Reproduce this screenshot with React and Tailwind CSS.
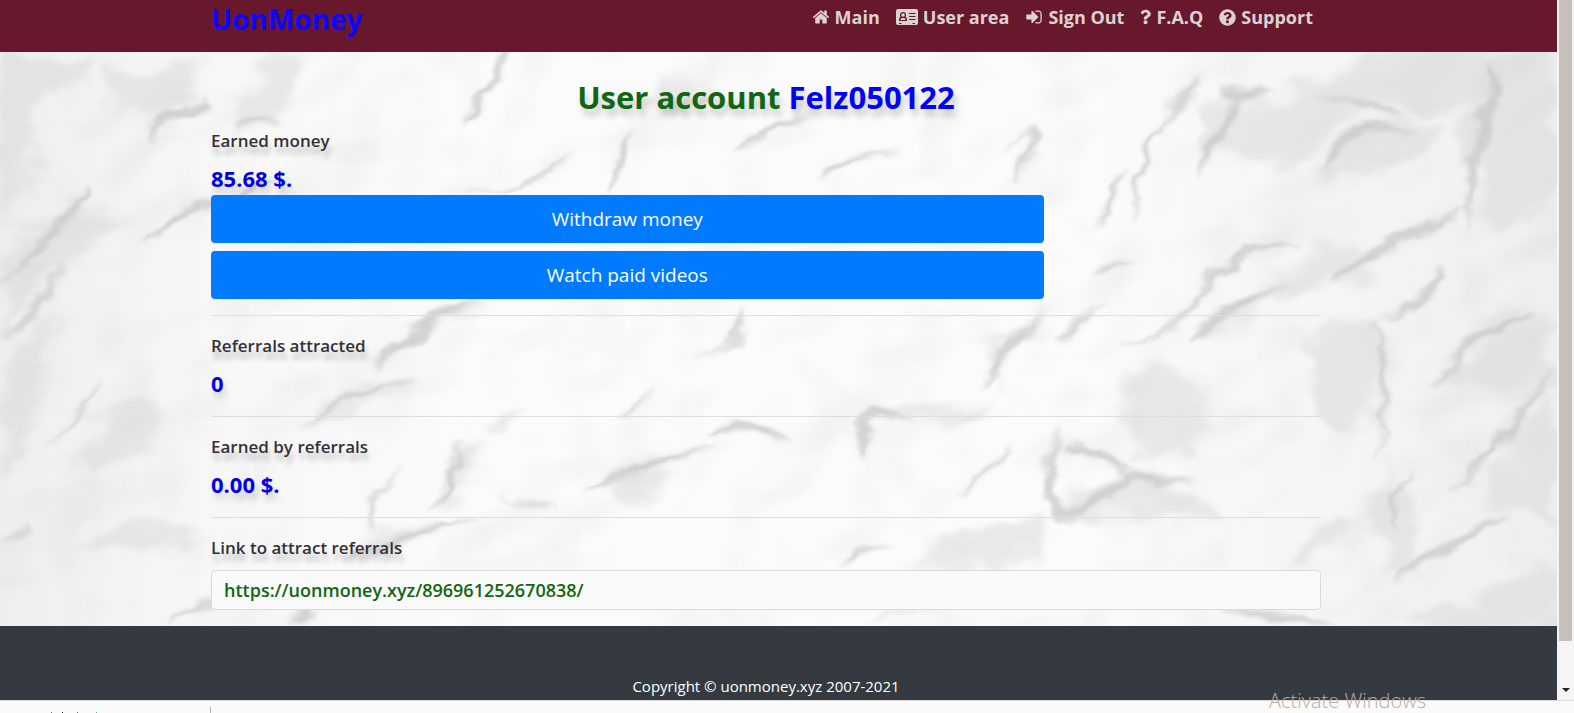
import { FaQuestion, FaQuestionCircle } from 'react-icons/fa';

const HomeIcon = () => (
  <svg className="w-[18px] h-[18px]" viewBox="0 0 1792 1792" fill="currentColor" aria-hidden="true">
    <path d="M1472 992v480q0 26-19 45t-45 19h-384v-384h-256v384h-384q-26 0-45-19t-19-45v-480q0-1 .5-3t.5-3l575-474 575 474q1 2 1 6zm223-69l-62 74q-8 9-21 11h-3q-13 0-21-7l-692-577-692 577q-12 8-24 7-13-2-21-11l-62-74q-8-10-7-23.5t11-21.5l719-599q32-26 76-26t76 26l244 204v-195q0-14 9-23t23-9h192q14 0 23 9t9 23v408l219 182q10 8 11 21.5t-7 23.5z" />
  </svg>
);

const CardIcon = () => (
  <svg className="w-[22px] h-[18px]" viewBox="0 0 22 18" aria-hidden="true">
    <rect x="0" y="1" width="22" height="16" rx="2" fill="currentColor" />
    <path d="M3 13v-1.500q0-2.500 2-2.700h4q2 .2 2 2.700V13z" fill="#68182d" />
    <circle cx="7" cy="7" r="3" fill="#68182d" />
    <circle cx="7" cy="7" r="1.800" fill="currentColor" />
    <path d="M4.500 12q0-2 1.300-2h2.400q1.300 0 1.300 2z" fill="currentColor" />
    <path d="M13 5.500h6.500M13 8.500h6.500M13 11.500h6.500M3 15.500h2.500M16.500 15.500H19" stroke="#68182d" strokeWidth="1.200" />
  </svg>
);

const SignIcon = () => (
  <svg className="w-[18px] h-[18px]" viewBox="0 0 1792 1792" fill="currentColor" aria-hidden="true">
    <path d="M1312 896q0 26-19 45l-544 544q-19 19-45 19t-45-19-19-45v-288h-448q-26 0-45-19t-19-45v-384q0-26 19-45t45-19h448v-288q0-26 19-45t45-19 45 19l544 544q19 19 19 45zm352-352v704q0 119-84.500 203.500t-203.500 84.500h-320q-13 0-22.500-9.500t-9.500-22.500q0-4-1-20t-.5-26.500 3-23.500 10-19.500 20.500-6.500h320q66 0 113-47t47-113v-704q0-66-47-113t-113-47h-312l-11.500-1-11.500-3-8-5.500-7-9-2-13.500q0-4-1-20t-.5-26.500 3-23.500 10-19.500 20.500-6.500h320q119 0 203.500 84.500t84.500 203.500z" />
  </svg>
);

const navItems = [
  { label: 'Main', icon: <HomeIcon /> },
  { label: 'User area', icon: <CardIcon /> },
  { label: 'Sign Out', icon: <SignIcon /> },
  { label: 'F.A.Q', icon: <FaQuestion className="w-[11px] h-4" /> },
  { label: 'Support', icon: <FaQuestionCircle className="w-[17px] h-[17px]" /> },
];

// wide soft shades of the paper
const shades = [
  'M0 31H180L90 180 60 420 0 480z',
  'M200 60L400 40 380 160 300 200 210 190z',
  'M520 31H610L560 190 490 210z',
  'M0 560L180 400 250 470 150 560 60 700 0 760z',
  'M0 900L130 700 100 960 0 1180z',
  'M200 980L300 900 330 1000 180 1130 120 1100z',
  'M150 1330L230 1260 380 1290 350 1340 180 1350z',
  'M300 260L310 180 400 150 420 200 340 210z',
  'M780 830L870 710 960 690 850 760z',
  'M610 1010L640 950 740 890 820 905 740 950 680 1000z',
  'M865 1230L925 1050 970 1060 900 1200z',
  'M690 1375L740 1290 850 1275 940 1250 800 1310z',
  'M970 1000L1020 960 1040 990 990 1030z',
  'M1320 120L1400 110 1370 180 1340 200z',
  'M1200 1150L1290 1100 1350 1130 1290 1210 1210 1190z',
  'M2380 340L2420 200 2460 160 2760 60 2820 31 3102 31V230L2950 160 2740 170 2600 300z',
  'M2630 380L2680 260 2760 200 2900 210 2800 300z',
  'M2920 200L2990 80 3102 110V420L2960 520z',
  'M2530 650L2600 530 2720 560 2780 600 2650 640 2560 690z',
  'M2380 780L2430 700 2520 680 2500 720z',
  'M2240 870L2360 850 2400 1000 2360 1090 2240 1080z',
  'M2080 1240L2240 1140 2390 1160 2440 1240 2200 1250z',
  'M1830 1350L2060 1250 2070 1380 1780 1380z',
  'M2860 900L2990 720 3102 720V860L3010 940z',
  'M2600 760L2740 740 2770 950 2700 1060 2620 960z',
  'M2700 1180L2790 1120 2830 1380 2780 1410z',
  'M2560 1350L2640 1260 2700 1290 2620 1360z',
  'M2860 1480L3102 1350V1531H2820z',
  'M2970 1050L3102 880V1300L2990 1220z',
  'M1700 1531L1780 1495 1920 1490 1750 1531z',
  'M1740 950L1760 970 1910 950 1950 920 1900 1000 1760 995z',
  'M1970 900L1990 820 2060 730 2090 740 2010 830z',
];

// creases, each a sliver that narrows at its ends
const folds = [
  'M1005 31Q965 110 920 228L942 215Q975 130 1018 31z',
  'M290 270Q300 180 410 155Q430 190 400 190Q330 190 290 270z',
  'M470 240Q500 195 555 212Q510 215 470 240z',
  'M0 628Q80 540 175 385Q190 420 60 575z',
  'M0 770Q80 700 120 580Q100 720 0 770z',
  'M100 1050Q180 980 205 880Q170 970 100 1050z',
  'M0 1310Q30 1280 55 1250Q45 1290 0 1310z',
  'M280 525Q370 410 550 375Q400 440 280 525z',
  'M925 402Q1010 405 1145 300Q1060 400 925 402z',
  'M1220 392Q1215 300 1258 238Q1240 320 1220 392z',
  'M1465 282Q1520 220 1620 200Q1530 250 1465 282z',
  'M738 860Q800 730 965 675Q860 750 738 860z',
  'M615 1012Q680 890 825 905Q690 910 615 1012z',
  'M1235 990Q1270 960 1302 915Q1270 980 1235 990z',
  'M1390 832Q1470 800 1485 705Q1500 790 1390 832z',
  'M1405 1030Q1490 960 1575 1050Q1500 1010 1405 1030z',
  'M1165 1182Q1240 1110 1430 1060Q1290 1130 1165 1182z',
  'M1005 1178Q1040 1230 1115 1215Q1060 1250 1005 1178z',
  'M735 1285Q720 1200 812 1100Q740 1190 735 1285z',
  'M690 1375Q780 1270 945 1255Q790 1300 690 1375z',
  'M865 1230Q890 1130 925 1050Q920 1140 865 1230z',
  'M330 1530Q390 1470 510 1435Q420 1480 330 1530z',
  'M580 1531Q580 1500 615 1465Q620 1500 605 1531z',
  'M1625 370Q1640 300 1795 285Q1680 310 1625 370z',
  'M2010 300Q2030 230 2070 240Q2085 300 2020 365Q2075 270 2055 250Q2030 240 2010 300z',
  'M2180 500Q2190 400 2250 340Q2210 410 2180 500z',
  'M2260 465Q2270 280 2330 200Q2290 290 2260 465z',
  'M2385 345Q2430 200 2470 145Q2470 210 2385 345z',
  'M2320 210Q2340 130 2400 90Q2360 150 2320 210z',
  'M2440 130Q2500 110 2530 130Q2470 150 2440 160z',
  'M2620 152Q2760 150 2790 195Q2700 160 2620 152z',
  'M2960 60Q3010 100 2950 270Q2930 350 2930 500Q2910 330 2945 200Q2970 130 2960 60z',
  'M2630 340Q2680 170 2825 235Q2720 200 2630 340z',
  'M2245 800Q2350 750 2390 660Q2440 510 2590 530Q2450 545 2400 660Q2360 760 2245 800z',
  'M2375 790Q2420 680 2570 640Q2450 710 2375 790z',
  'M2650 622Q2740 520 2920 440Q2790 550 2650 622z',
  'M1965 905Q1970 790 2065 725Q2010 800 1965 905z',
  'M2110 795Q2130 740 2190 690Q2150 760 2110 795z',
  'M2170 620Q2190 570 2260 585Q2200 590 2170 620z',
  'M1715 1085Q1700 990 1740 950Q1790 960 1820 985Q1750 960 1735 990Q1740 1040 1715 1085z',
  'M1905 1195Q1970 1140 2020 1060Q1990 1140 1905 1195z',
  'M2108 1250Q2050 1150 2110 1010Q2080 1140 2115 1230Q2190 1190 2250 1130Q2320 1140 2380 1155Q2310 1165 2255 1150Q2190 1220 2108 1250z',
  'M2115 1050Q2200 1060 2255 1140Q2190 1090 2115 1065z',
  'M2735 730Q2790 850 2740 1090Q2770 880 2735 730z',
  'M3095 870Q3020 1030 2890 1190Q2990 1020 3095 870z',
  'M2860 905Q2920 740 3060 710Q2930 780 2860 905z',
  'M2740 725Q2840 700 2862 590Q2880 710 2740 725z',
  'M2790 1415Q2860 1290 3010 1240Q2890 1320 2790 1415z',
  'M2785 1290Q2760 1190 2800 1120Q2780 1200 2785 1290z',
  'M2440 1490Q2540 1490 2660 1525Q2540 1525 2440 1490z',
  'M1675 1385Q1690 1320 1770 1318Q1710 1340 1675 1385z',
];

function Paper() {
  return (
    <svg className="absolute inset-0 w-full h-full" viewBox="0 31 3102 1500" preserveAspectRatio="none" aria-hidden="true">
      <defs>
        <filter id="crumple" x="0" y="0" width="1" height="1" colorInterpolationFilters="sRGB">
          <feTurbulence type="fractalNoise" baseFrequency="0.003 0.003" numOctaves="3" seed="8" />
          <feDiffuseLighting surfaceScale="50" lightingColor="#ffffff" diffuseConstant="1.150">
            <feDistantLight azimuth="215" elevation="60" />
          </feDiffuseLighting>
        </filter>
        <filter id="shade" colorInterpolationFilters="sRGB">
          <feTurbulence type="fractalNoise" baseFrequency="0.008" numOctaves="3" seed="3" result="n" />
          <feGaussianBlur in="SourceGraphic" stdDeviation="11 13" />
          <feDisplacementMap in2="n" scale="130" xChannelSelector="R" yChannelSelector="G" />
        </filter>
        <filter id="fold" colorInterpolationFilters="sRGB">
          <feTurbulence type="fractalNoise" baseFrequency="0.012" numOctaves="3" seed="5" result="n" />
          <feGaussianBlur in="SourceGraphic" stdDeviation="5 6" />
          <feDisplacementMap in2="n" scale="50" xChannelSelector="R" yChannelSelector="G" />
        </filter>
        <linearGradient id="edges">
          <stop offset="0" stopColor="#ededed" />
          <stop offset=".14" stopColor="#f7f7f7" />
          <stop offset=".3" stopColor="#fbfbfb" />
          <stop offset=".7" stopColor="#fbfbfb" />
          <stop offset="1" stopColor="#eeeeee" />
        </linearGradient>
      </defs>
      <rect y="31" width="3102" height="1500" fill="url(#edges)" />
      <rect y="31" width="3102" height="1500" filter="url(#crumple)" opacity=".1" />
      <g filter="url(#shade)" fill="#d8d8da" opacity=".5">
        {shades.map((d) => <path key={d} d={d} />)}
      </g>
      <g filter="url(#fold)" fill="#c8c8ca" stroke="#c8c8ca" strokeWidth="3" opacity=".75">
        {folds.map((d) => <path key={d} d={d} />)}
      </g>
    </svg>
  );
}

const Label = ({ children, ...rest }) => (
  <label className="block mb-2 text-[17px] leading-7 font-semibold text-[#343038] [text-shadow:2px_8px_5px_rgba(0,0,0,0.2)]" {...rest}>
    {children}
  </label>
);

const Value = ({ children, id }) => (
  <output id={id} className="block text-[22px] leading-[30px] pb-0.5 font-bold text-[#0000e8] [text-shadow:3px_7px_6px_rgba(0,0,0,0.15)]">
    {children}
  </output>
);

const Rule = () => <hr className="my-4 border-t border-[#dedede]" />;

export default function App() {
  return (
    <div className="h-screen flex flex-col overflow-hidden bg-[#fafafa] font-['Open_Sans','Noto_Sans',sans-serif]">
      <div className="flex flex-1 min-h-0">
        <div className="flex-1 min-w-0 flex flex-col overflow-hidden">
          <header className="shrink-0 h-[52px] bg-[#68182d] pr-[25px]">
            <div className="max-w-[1110px] mx-auto flex items-start justify-between">
              <a href="#" className="text-[28px] leading-[38px] font-bold text-[#0d05ff]">UonMoney</a>
              <nav className="flex">
                {navItems.map((item) => (
                  <a key={item.label} href="#" className="flex items-center gap-[5px] px-2 text-[18px] leading-[34px] font-bold text-[#dcd3cf]">
                    {item.icon}
                    {item.label}
                  </a>
                ))}
              </nav>
            </div>
          </header>

          <main className="relative shrink-0 pt-6 pb-4 pr-[25px]">
            <Paper />
            <div className="relative max-w-[1110px] mx-auto">
              <h1 className="mb-2 text-center text-[31px] leading-[43px] font-bold text-[#116611] [text-shadow:3px_7px_6px_rgba(0,0,0,0.2)]">
                User account <span className="text-[#0000ff]">Felz050122</span>
              </h1>

              <Label htmlFor="earned">Earned money</Label>
              <Value id="earned">85.68 $.</Value>
              <div className="w-3/4 flex flex-col gap-2">
                <button className="h-12 rounded bg-[#007bff] text-[19px] text-white">Withdraw money</button>
                <button className="h-12 rounded bg-[#007bff] text-[19px] text-white">Watch paid videos</button>
              </div>
              <Rule />

              <Label htmlFor="referrals">Referrals attracted</Label>
              <Value id="referrals">0</Value>
              <Rule />

              <Label htmlFor="ref-earned">Earned by referrals</Label>
              <Value id="ref-earned">0.00 $.</Value>
              <Rule />

              <Label htmlFor="ref-link">Link to attract referrals</Label>
              <input
                id="ref-link"
                readOnly
                defaultValue="https://uonmoney.xyz/896961252670838/"
                className="block w-full h-10 px-3 rounded border border-[#dadada] bg-[#fafafa] text-[18px] font-semibold text-[#116611]"
              />
            </div>
          </main>

          <footer className="grow shrink-0 bg-[#343a40] pt-12 pr-[25px] text-center text-[15px] leading-6 text-white">
            Copyright © uonmoney.xyz 2007-2021
          </footer>
        </div>

        {/* scrollbar */}
        <div className="w-[17px] shrink-0 flex flex-col items-center bg-[#f5f5f5] pb-1.5">
          <div className="w-[13px] grow bg-[#c6c0ba]"></div>
          <svg className="w-2 h-[53px] shrink-0" viewBox="0 0 8 53" aria-hidden="true">
            <path d="M0 47h8l-4 4z" fill="#222" />
          </svg>
        </div>
      </div>

      {/* downloads bar */}
      <div className="relative shrink-0 h-[13px] border-t border-[#dcdcdc] bg-[#fafafa]">
        <div className="w-[211px] h-full pt-1.5">
          <div className="h-full border-r border-[#b5b5b5] flex items-end gap-[10px] pl-[51px]">
            <i className="w-px h-px bg-[#3a7fb5]"></i>
            <i className="w-px h-px bg-[#221133]"></i>
            <i className="w-px h-px ml-1 bg-[#776666]"></i>
            <i className="w-px h-px ml-2 bg-[#6aa0c8]"></i>
          </div>
        </div>
        <span className="absolute right-[148px] -top-3 text-[20px] leading-6 font-light text-[#b9aca6] whitespace-nowrap">Activate Windows</span>
      </div>
    </div>
  );
}
